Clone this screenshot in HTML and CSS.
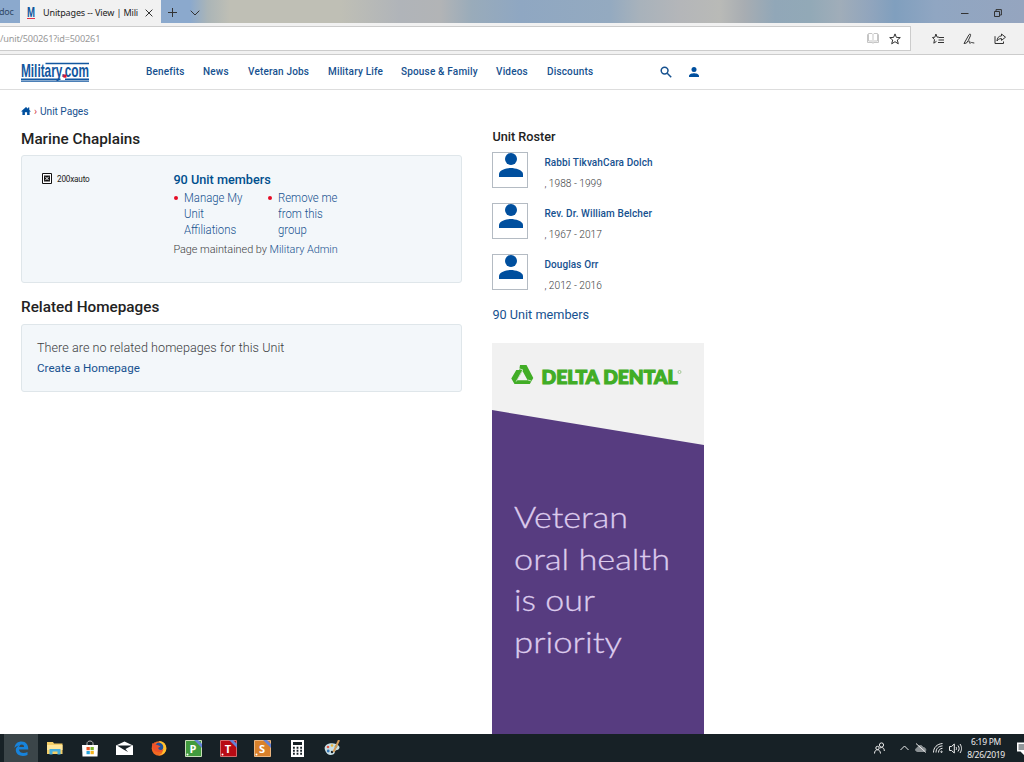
FILE: index.html
```html
<!DOCTYPE html>
<html lang="en">
<head>
<meta charset="utf-8">
<title>Unitpages -- View | Military.com</title>
<link rel="stylesheet" href="styles.css">
</head>
<body>
<svg class="defs" width="0" height="0">
  <symbol id="person" viewBox="0 0 24 24"><circle cx="12" cy="6" r="6"/><path d="M0 24v-3c0-4 8-6 12-6s12 2 12 6v3z"/></symbol>
  <symbol id="star" viewBox="0 0 12 12"><path d="M6 .9 7.4 4.4 11.3 4.6 8.3 7 9.3 10.8 6 8.7 2.7 10.8 3.7 7 .7 4.6 4.6 4.4z"/></symbol>
</svg>

<div class="tabbar">
  <div class="tab-prev">doc</div>
  <div class="tab">
    <svg class="favicon" viewBox="0 0 8 12"><text x="0" y="10" textLength="8" lengthAdjust="spacingAndGlyphs" class="favicon-m">M</text><path d="M0 11.5h8" stroke="#e0344a" stroke-width="1"/></svg>
    <span class="tab-title">Unitpages -- View | Mili</span>
    <svg class="line-icon" width="8" height="8" viewBox="0 0 8 8"><path d="M.6.6 7.4 7.4M7.4.6.6 7.4"/></svg>
  </div>
  <div class="tab-tools">
    <svg class="line-icon" width="9" height="9" viewBox="0 0 9 9"><path d="M4.5 0v9M0 4.5h9"/></svg>
    <svg class="line-icon" width="10" height="6" viewBox="0 0 10 6"><path d="m.7.7 4.3 4.3L9.300.7"/></svg>
  </div>
  <div class="window-tools">
    <svg class="line-icon" width="8" height="8" viewBox="0 0 8 8"><path d="M0 4.500h7.500"/></svg>
    <svg class="line-icon" width="8" height="8" viewBox="0 0 8 8"><path d="M.5 2.500h5v5h-5zM2 2.500V.6h5.400V6H5.500"/></svg>
  </div>
</div>

<div class="toolbar">
  <div class="address">
    <span class="url">/unit/500261?id=500261</span>
    <svg class="line-icon reader" width="12" height="11" viewBox="0 0 12 11"><path d="M.5 1.500h1V.5H5l1 1 1-1h3.500v1h1v8H7l-1 .8-1-.8H.5zM6 1.500V10M1.500 1.500v6.500H5M10.500 1.500v6.500H7"/></svg>
    <svg class="line-icon" width="12" height="12"><use href="#star"/></svg>
  </div>
  <div class="tools">
    <svg class="line-icon" width="12" height="12" viewBox="0 0 12 12"><path d="M7 4.200 5.100 4.100 3.900 1 2.900 4.200.5 4.500l2 2.200-.7 3.500L4.500 8.300M7 4.500h5M6.500 7h5.500M6 9.500h6"/></svg>
    <svg class="line-icon" width="12" height="12" viewBox="0 0 12 12"><path d="M1 10.500 6 1.700C7.200.5 8 1.300 7.500 2.700L5.300 7.500 3.500 10 1 10.500zM5.500 8.500c1-1 1.600-.2 1.100.8s.3 1.300 1.200.5 1.500.2 3.500.2"/></svg>
    <svg class="line-icon" width="12" height="12" viewBox="0 0 12 12"><path d="M1 3.200v7.300h8.500V8.500M7.500 1l4 3.200-4 3.200V5.600C5 5.600 4 6.500 3 8 3.200 5 4.500 3 7.500 2.900z"/></svg>
  </div>
</div>

<header class="site-header">
  <svg class="logo" viewBox="0 0 68 20">
    <path d="M24.500 1.500H68M0 17.200h39.500M44 17.200h24M0 19.100h68"/>
    <text x="0" y="15.200" textLength="68" lengthAdjust="spacingAndGlyphs">Military.com</text>
    <rect x="42.400" y="12.500" width="3" height="3.200"/>
  </svg>
  <nav class="nav">
    <a>Benefits</a><a>News</a><a>Veteran Jobs</a><a>Military Life</a><a>Spouse &amp; Family</a><a>Videos</a><a>Discounts</a>
  </nav>
  <svg class="search" width="12" height="12" viewBox="0 0 12 12"><circle cx="4.600" cy="4.600" r="3.400"/><path d="m7.200 7.200 4 4"/></svg>
  <svg class="account" width="10" height="10"><use href="#person"/></svg>
</header>

<main class="content">
  <section class="primary">
    <div class="breadcrumb">
      <svg width="10" height="8" viewBox="0 0 10 8"><path d="M5 0 0 4.500h1.400V8h2.500V5.200h2.200V8h2.500V4.500H10L8.300 3V.6H7v1.200z"/></svg>
      <span class="crumb-sep">›</span><a>Unit Pages</a>
    </div>
    <h1 class="title">Marine Chaplains</h1>
    <div class="card unit">
      <div class="missing">
        <svg width="10" height="11" viewBox="0 0 10 11"><path d="M.5.500h9v10H.5z" fill="#fff" stroke="#111"/><path d="M2 2.500h6v6H2z" fill="#111"/><path d="m3.300 3.800 3.400 3.400m0-3.400L3.300 7.200" stroke="#fff"/></svg>
        <span>200xauto</span>
      </div>
      <div class="unit-info">
        <a class="unit-count">90 Unit members</a>
        <ul class="actions">
          <li><a>Manage My<br>Unit<br>Affiliations</a></li>
          <li><a>Remove me<br>from this<br>group</a></li>
        </ul>
        <p class="maintained">Page maintained by <a>Military Admin</a></p>
      </div>
    </div>
    <h2 class="title related-title">Related Homepages</h2>
    <div class="card related">
      <p class="none">There are no related homepages for this Unit</p>
      <a class="create">Create a Homepage</a>
    </div>
  </section>

  <aside class="side">
    <h3 class="roster-title">Unit Roster</h3>
    <div class="member"><div class="avatar"><svg width="24" height="24"><use href="#person"/></svg></div><div><a class="name">Rabbi TikvahCara Dolch</a><p class="years">, 1988 - 1999</p></div></div>
    <div class="member"><div class="avatar"><svg width="24" height="24"><use href="#person"/></svg></div><div><a class="name">Rev. Dr. William Belcher</a><p class="years">, 1967 - 2017</p></div></div>
    <div class="member"><div class="avatar"><svg width="24" height="24"><use href="#person"/></svg></div><div><a class="name">Douglas Orr</a><p class="years">, 2012 - 2016</p></div></div>
    <a class="all-members">90 Unit members</a>
    <svg class="ad" width="212" height="391" viewBox="0 0 212 391">
      <path d="M0 0h212v391H0z" fill="#f1f1f1"/>
      <path d="M0 67 212 102V391H0z" fill="#573c80"/>
      <g fill="#41ad26">
        <path d="M28 22h6.500L41.300 35l-3.500 6H22.500l-3.200-5.500 5-8.500h2.900zM30.500 28l-5.400 9.200h10.500z" fill-rule="evenodd"/>
        <path d="m26.500 25.500 4.500 1.500m-.3 0-6.500 11.500m11.600-1.500 3.500 1" stroke="#f1f1f1" stroke-width=".7" fill="none"/>
        <text class="delta" x="49.500" y="40.600" textLength="136" lengthAdjust="spacingAndGlyphs">DELTA DENTAL</text>
      </g>
      <circle cx="187.500" cy="29" r="1.500" fill="none" stroke="#91bd82" stroke-width=".8"/>
      <g class="slogan">
        <text x="22" y="185" textLength="114" lengthAdjust="spacingAndGlyphs">Veteran</text>
        <text x="22" y="227" textLength="156" lengthAdjust="spacingAndGlyphs">oral health</text>
        <text x="22" y="268" textLength="81" lengthAdjust="spacingAndGlyphs">is our</text>
        <text x="22" y="310" textLength="108" lengthAdjust="spacingAndGlyphs">priority</text>
      </g>
    </svg>
  </aside>
</main>

<footer class="taskbar">
  <div class="task active"><svg width="15" height="15" viewBox="0 0 15 15"><path d="M.5 7C1 2.500 4 .5 7.500.5c4.500 0 6.800 3 6.800 8H5c.2 4 5.500 4.200 8.500 2.500v3C8 16.300 1.800 14.200 1.800 9 1.800 7 3 5.500 5.200 4.500 3.500 4.500 1.500 5.500.5 7zm4.700-1h4.900C10 2.700 5.500 2.800 5.200 6z" fill="#1783dc"/></svg></div>
  <div class="task"><svg width="16" height="14" viewBox="0 0 16 14"><path d="M0 1h6l1 1.500h8.500V13H0z" fill="#f5ce67"/><path d="M0 4h15.500v5H0z" fill="#ffe79c"/><path d="M2.500 13.500V8h11v5.500h-3v-3h-5v3z" fill="#46aede"/></svg></div>
  <div class="task"><svg width="16" height="17" viewBox="0 0 16 17"><path d="M5 5V3.500C5 .2 11 .2 11 3.500V5" fill="none" stroke="#bbb"/><path d="M0 5h16l-.5 11.500H.5z" fill="#fff"/><path d="M4.500 7h3.300v3.200H4.500z" fill="#e95527"/><path d="M8.500 7h3.300v3.200H8.500z" fill="#7bb42c"/><path d="M4.500 11h3.300v3.200H4.500z" fill="#25a3db"/><path d="M8.500 11h3.300v3.200H8.500z" fill="#f5b51c"/></svg></div>
  <div class="task"><svg width="17" height="14" viewBox="0 0 17 14"><path d="m0 4.500 8.500-4 8.500 4V14H0z" fill="#fff"/><path d="M1 4.500h15L9.500 8l2.500 3-4.500-2.500z" fill="#182126"/></svg></div>
  <div class="task"><svg width="16" height="16" viewBox="0 0 16 16"><circle cx="8" cy="8.500" r="7.300" fill="#f36821"/><path d="M8 1c5 0 7.700 4 7.300 8s-4 6.500-7.800 6.300c4-1 5-4 3.500-7z" fill="#ffc22e"/><circle cx="8" cy="7" r="4.300" fill="#20539d"/><path d="M1 3c0 6 2 9 7 9 3 0 4-1 4.500-3-3 2-6 .5-5-1.500l2-.8C8 5 6 5 4.500 4.500L3.500 2 2.300 4z" fill="#ed522b"/></svg></div>
  <div class="task"><svg class="app" width="17" height="17" viewBox="0 0 17 17"><path d="M.5.500h16v16H.5z" fill="#429b3e" stroke="#c8deb9"/><path d="M9 0h4l4 4v4z" fill="#6482d8"/><text x="8" y="12.500">P</text><circle cx="2.500" cy="14.500" r="1"/></svg></div>
  <div class="task"><svg class="app" width="17" height="17" viewBox="0 0 17 17"><path d="M.5.500h16v16H.5z" fill="#b90b14" stroke="#d46b6b"/><path d="M9 0h4l4 4v4z" fill="#6482d8"/><text x="8" y="12.500">T</text><circle cx="2.500" cy="14.500" r="1"/></svg></div>
  <div class="task"><svg class="app" width="17" height="17" viewBox="0 0 17 17"><path d="M.5.500h16v16H.5z" fill="#d9812b" stroke="#eab57f"/><path d="M9 0h4l4 4v4z" fill="#6482d8"/><text x="8" y="12.500">S</text><circle cx="2.500" cy="14.500" r="1"/></svg></div>
  <div class="task"><svg width="13" height="17" viewBox="0 0 13 17"><path d="M0 0h13v17H0z" fill="#fff"/><path d="M2 2h9v3H2z" fill="#172126"/><path d="M2 7.700h9M2 10.700h9M2 13.700h9" stroke="#172126" stroke-width="2" stroke-dasharray="1.800 1.800"/></svg></div>
  <div class="task"><svg width="17" height="16" viewBox="0 0 17 16"><path d="M1 10c-2-5 5-8 11-6 5 2 4 5 1 6-3 0-1 3-4 4.500S2 14 1 10z" fill="#c9dfe5"/><circle cx="4" cy="7" r="1.300" fill="#df5545"/><circle cx="8" cy="5.500" r="1.300" fill="#e7b33a"/><circle cx="12" cy="6.500" r="1.300" fill="#56a465"/><circle cx="4.200" cy="11" r="1.400" fill="#3979b7"/><circle cx="8" cy="12" r="1.200" fill="#172126"/><path d="M15 0 9.500 12" stroke="#d49b58" stroke-width="2"/></svg></div>
  <div class="tray">
    <svg width="11" height="12" viewBox="0 0 11 12"><circle cx="7.500" cy="3" r="2.100"/><circle cx="3.500" cy="6" r="1.700"/><path d="M.5 11.500c0-5 5.800-5 6 0M6 6c2-1 4.300-.5 4.300 3"/></svg>
    <svg width="9" height="6" viewBox="0 0 9 6"><path d="M.5 5 4.500 1l4 4"/></svg>
    <svg width="12" height="10" viewBox="0 0 12 10"><path d="M3 8.500C-.5 8.500 0 5 2.500 5 3 2 7 1.500 8 4.500c3-.3 4 4 1 4z" fill="#8b9194" stroke="#8b9194"/><path d="m1 .5 10 9" stroke="#eee"/></svg>
    <svg width="10" height="10" viewBox="0 0 10 10"><path d="M.5 9.500c0-5 3.500-8.500 9-9M3 9.500c0-4 2.500-6.300 6.500-6.600M5.500 9.500c0-2.500 1.500-4 4-4.200"/><circle cx="8.500" cy="8.800" r=".7"/></svg>
    <svg class="volume" width="13" height="11" viewBox="0 0 13 11"><path d="M.5 3.500h2L5.300 1v9L2.500 7.500h-2zM7 4c.7 1 .7 2 0 3M9 2.500c1.500 2 1.500 4 0 6M11 1c2 3 2 6 0 9"/></svg>
    <div class="clock"><span>6:19 PM</span><span>8/26/2019</span></div>
    <svg class="notice" width="7" height="13" viewBox="0 0 7 13"><path d="M0 .5h7V13L3.500 9.500H0z" fill="#fff" stroke="none"/><path d="M1.500 3h5.500M1.500 5h5.500M1.500 7h5.500" stroke="#29343a"/></svg>
  </div>
</footer>
</body>
</html>
```
FILE: styles.css
```css
* { box-sizing: border-box; }
body { margin: 0; width: 1024px; height: 762px; display: flex; flex-direction: column; overflow: hidden; background: #fff; font-family: Roboto, sans-serif; color: #3c3d3f; }
h1, h2, h3, p, ul { margin: 0; padding: 0; font-weight: 400; }
a, span { white-space: nowrap; }
svg { flex: none; display: block; }
.defs { position: absolute; }
a { color: #16518f; }

.tabbar { height: 23px; flex: none; display: flex; align-items: center; background: linear-gradient(90deg, #8ba9cd 0, #8ba9cd 190px, #abb5b7 208px, #bfbfb5 230px, #bfbfb5 340px, #b0b4b9 400px, #b2b4b6 440px, #99abba 472px, #8fa7c2 520px, #94aac0 610px, #a8b2bb 640px, #b4b6b9 680px, #b9bab7 720px, #a8adb2 744px, #91a7b8 775px, #92a9b7 810px, #a0adb9 840px, #91a5bd 870px, #809fbe 895px, #90a6c2 935px, #95a5bf 1024px); font-family: "Noto Sans", sans-serif; font-size: 9px; color: #222; }
.tab-prev { width: 20px; letter-spacing: -.2px; line-height: 22px; color: #304866; text-indent: -1px; }
.tab { width: 141px; height: 23px; display: flex; align-items: center; padding: 2px 8px 0 7px; background: #f1f1f1; }
.favicon { width: 8px; height: 12px; overflow: visible; }
.favicon-m { font: bold 14px "Liberation Sans", sans-serif; fill: #0d569e; }
.tab-title { margin-left: 8px; width: 102px; letter-spacing: -.13px; }
.line-icon { fill: none; stroke: #333; stroke-width: 1; }
.tab-tools { display: flex; align-items: center; gap: 13px; padding: 2px 0 0 7px; }
.window-tools { display: flex; gap: 25px; margin-left: auto; padding: 2px 22px 0 0; }

.toolbar { height: 32px; flex: none; display: flex; align-items: center; background: #f1f1f1; border-bottom: 1px solid #ccc; }
.address { width: 911px; height: 25px; display: flex; align-items: center; background: #fff; border: 1px solid #ccc; border-left: 0; padding-right: 9px; }
.url { font: 9.200px "Noto Sans", sans-serif; color: #999; margin-right: auto; letter-spacing: -.18px; }
.reader { stroke: #c5c5c5; margin-right: 10px; }
.tools { display: flex; gap: 19px; padding-left: 21px; }

.site-header { height: 35px; flex: none; display: flex; align-items: center; border-bottom: 1px solid #ddd; padding-left: 21px; }
.logo { width: 68px; height: 20px; margin-right: 57px; overflow: visible; }
.logo path { stroke: #1257a0; stroke-width: 1.400; }
.logo text { font: bold 18.500px "Liberation Sans Narrow", "Liberation Sans", sans-serif; fill: #1257a0; }
.logo rect { fill: #e3132c; }
.nav { display: grid; grid-template-columns: 57px 45px 80px 73px 95px 51px 113px; font-size: 10px; font-weight: 500; letter-spacing: .17px; line-height: 14px; }
.search { fill: none; stroke: #16518f; stroke-width: 1.500; }
.account { fill: #004f9e; margin-left: 17px; }

.content { flex: 1; min-height: 0; display: flex; padding-left: 21px; gap: 30.400px; overflow: hidden; }
.primary { width: 441px; padding-top: 14px; }
.breadcrumb { display: flex; align-items: center; height: 14px; font-size: 10.200px; letter-spacing: -.05px; }
.breadcrumb svg { fill: #004f9e; }
.crumb-sep { color: #d33442; width: 9px; text-align: center; }
.title { font-size: 15.300px; line-height: 20px; font-weight: 500; color: #222; margin-top: 11px; }
.card { background: #f3f7fa; border: 1px solid #dfe6ea; border-radius: 3px; }
.unit { height: 128px; margin-top: 6px; display: flex; padding: 16px 20px; }
.missing { display: flex; align-items: flex-start; gap: 5px; width: 131.400px; font-size: 8.200px; line-height: 12px; color: #222; padding-top: 1px; letter-spacing: -.2px; }
.unit-count { display: block; font-size: 12.700px; line-height: 16px; font-weight: 500; color: #004f8e; }
.actions { display: flex; list-style: none; font-size: 13.200px; line-height: 16.200px; font-weight: 300; margin-top: 1.500px; }
.actions li { display: flex; width: 94px; }
.actions li::before { content: ""; width: 4px; height: 4px; margin: 6px 6px 0 1px; border-radius: 50%; background: #e50c25; }
.actions a { transform: scaleX(.86); transform-origin: left top; }
.maintained { font-size: 10.900px; line-height: 18px; margin-top: 3px; font-weight: 300; letter-spacing: -.03px; }
.related-title { margin-top: 14px; }
.related { height: 68px; margin-top: 7px; padding: 13px 15px; }
.none { font-size: 12.600px; line-height: 20px; font-weight: 300; letter-spacing: .05px; }
.create { display: block; font-size: 11.600px; line-height: 21px; letter-spacing: .02px; }

.side { width: 212px; padding-top: 38px; }
.roster-title { font-size: 12.700px; line-height: 18px; font-weight: 500; color: #222; }
.member { display: flex; gap: 16px; height: 51px; padding-top: 6px; }
.avatar { width: 36px; height: 36px; border: 1px solid #b4bbc3; display: flex; justify-content: center; }
.avatar svg { fill: #004f9e; margin-left: 2px; }
.name { display: block; font-size: 10px; line-height: 20px; font-weight: 500; letter-spacing: .1px; padding-top: 1px; }
.years { font-size: 10.200px; line-height: 21px; font-weight: 300; }
.all-members { display: block; font-size: 12.700px; line-height: 20px; margin-top: 6px; }
.ad { margin-top: 18px; }
.delta { font: 900 18.500px Lato, sans-serif; stroke: #41ad26; stroke-width: 1.200; }
.slogan { font: 300 29.500px Lato, sans-serif; fill: #dccbed; stroke: #dccbed; stroke-width: .3; }

.taskbar { height: 28px; flex: none; display: flex; background: #172126; }
.task { width: 34.600px; display: flex; align-items: center; justify-content: center; }
.task.active { width: 34px; margin-left: 4px; background: #3b4549; }
.app text { font: bold 11px "Open Sans", sans-serif; text-anchor: middle; fill: #fff; }
.app circle { fill: #fff; }
.tray { margin-left: auto; display: flex; align-items: center; }
.tray svg { fill: none; stroke: #eee; stroke-width: 1; margin-right: 6px; }
.tray svg:first-child { margin-right: 15px; }
.tray .volume { margin-right: 2px; }
.clock { display: flex; flex-direction: column; align-items: center; width: 44px; margin-right: 9px; font: 8.500px/13px "Noto Sans", sans-serif; color: #eee; letter-spacing: -.3px; }
.tray .notice { margin-right: 0; }
```
